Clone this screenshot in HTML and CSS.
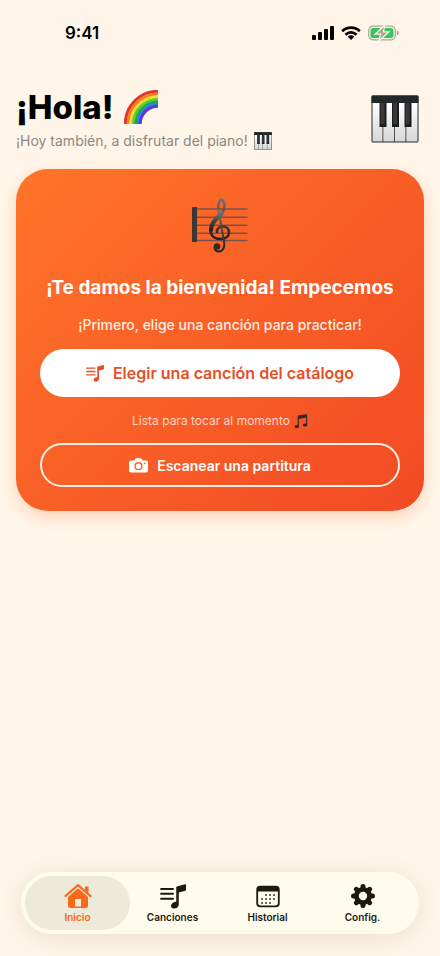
FILE: index.html
```
<!DOCTYPE html>
<html lang="es">
<head>
  <meta charset="UTF-8" />
  <meta name="viewport" content="width=device-width, initial-scale=1" />
  <title>Inicio</title>
  <link rel="stylesheet" href="styles.css">
</head>
<body>
  <svg class="defs" width="0" height="0" aria-hidden="true">
    <defs>
      <linearGradient id="keys" x1="0" y1="0" x2="0" y2="1">
        <stop offset="0" stop-color="#fff" />
        <stop offset="1" stop-color="#d6d6d6" />
      </linearGradient>
      <linearGradient id="clef-ink" x1="0" y1="0" x2="0" y2="1">
        <stop offset="0" stop-color="#77726e" />
        <stop offset="0.45" stop-color="#484442" />
        <stop offset="1" stop-color="#24211f" />
      </linearGradient>
      <symbol id="piano" viewBox="0 0 48 48">
        <rect x="0.5" y="0.5" width="47" height="47" rx="1.5" fill="#26292b" />
        <path d="M1.500 8h10v38.500h-10zM12.300 8h10.700v38.500h-10.700zM23.800 8h10.700v38.500h-10.700zM35.300 8h11.200v38.500h-11.200z" fill="url(#keys)" />
        <path d="M8.500 6h7v26h-7zM21 6h7v26h-7zM33.500 6h7v26h-7z" fill="#1b1c1d" />
        <path d="M9.500 7h4v22h-4zM22 7h4v22h-4zM34.500 7h4v22h-4z" fill="#36383a" />
        <rect x="0.500" y="0.500" width="47" height="7.500" rx="1" fill="#23282a" />
      </symbol>
      <symbol id="playlist" viewBox="0 0 24 24">
        <path d="M1 5.500h11M1 10h11M1 14.500h11" fill="none" stroke="currentColor" stroke-width="1.800" stroke-linecap="round" />
        <path d="M15.600 3.200 L23 1.200 Q24 1 24 2 V6.200 Q24 7 23.200 7.200 L17.300 8.700 V19.500 C17.300 22 15.500 23.500 13 23.500 C11 23.500 10 22.300 10.200 20.700 C10.500 18.500 13 17.500 15 17.300 V4 Q15 3.400 15.600 3.200Z" fill="currentColor" />
      </symbol>
    </defs>
  </svg>

  <div class="status-bar">
    <span class="time">9:41</span>
    <div class="status-icons">
      <svg width="22" height="14" viewBox="0 0 22 14" aria-hidden="true">
        <rect x="0" y="9" width="4" height="5" rx="1" />
        <rect x="6" y="6" width="4" height="8" rx="1" />
        <rect x="12" y="3" width="4" height="11" rx="1" />
        <rect x="18" y="0" width="4" height="14" rx="1" />
      </svg>
      <svg width="20" height="14" viewBox="0 0 20 14" aria-hidden="true">
        <path d="M1.200 5.200a12.500 12.500 0 0 1 17.600 0M4.500 8.700a7.800 7.800 0 0 1 11 0" fill="none" stroke="#000" stroke-width="2.700" />
        <path d="M10 14l-3.300-3.300a4.700 4.700 0 0 1 6.600 0z" />
      </svg>
      <svg width="31" height="16" viewBox="0 0 31 16" aria-hidden="true">
        <rect x="0.700" y="1.200" width="26.600" height="13.600" rx="4.500" fill="none" stroke="#aaa49b" stroke-width="1.200" />
        <rect x="2.500" y="3" width="23" height="10" rx="2.800" fill="#34c759" />
        <path d="M28.800 5.500c1.500.5 1.900 1.300 1.900 2.500s-.4 2-1.900 2.500z" fill="#aaa49b" />
        <path d="M17 0L7 9.200h5.600L10.800 16L21 6.800h-5.600z" fill="#aaa49b" stroke="#fff6e9" stroke-width="1.200" />
      </svg>
    </div>
  </div>

  <main>
    <header class="greeting">
      <div>
        <h1>¡Hola!
          <svg class="rainbow" viewBox="0 0 34 34" role="img" aria-label="arcoíris">
            <g fill="none" stroke-width="3">
              <path d="M1.300 34A32.700 32.700 0 0 1 34 1.300" stroke="#e3322b" />
              <path d="M4 34A30 30 0 0 1 34 4" stroke="#f57c20" />
              <path d="M6.700 34A27.300 27.300 0 0 1 34 6.700" stroke="#fdd92f" />
              <path d="M9.400 34A24.600 24.600 0 0 1 34 9.400" stroke="#57cf35" />
              <path d="M12 34A22 22 0 0 1 34 12" stroke="#20a54b" />
              <path d="M14 34A20 20 0 0 1 34 14" stroke="#2787df" />
              <path d="M16.200 34A17.800 17.800 0 0 1 34 16.200" stroke="#6734d2" />
            </g>
          </svg>
        </h1>
        <p>¡Hoy también, a disfrutar del piano! <svg class="piano-small" role="img" aria-label="piano"><use href="#piano" /></svg></p>
      </div>
      <svg class="piano" role="img" aria-label="piano"><use href="#piano" /></svg>
    </header>

    <section class="card">
      <svg class="clef" viewBox="0 0 56 56" role="img" aria-label="partitura">
        <path d="M4 11h51.500M4 19.300h51.500M4 27.300h51.500M4 35.300h51.500M4 42.500h51.500" stroke="#765449" stroke-width="1.400" />
        <rect x="0" y="9" width="5" height="35" fill="#3c3735" />
        <g fill="none" stroke="url(#clef-ink)" stroke-linecap="round" stroke-linejoin="round">
          <path d="M26.500 12C25.500 6 27.500 2 29.500 1.500C33 3.500 33.500 10 30.500 14.500C27 19.500 18.500 24 18.500 32C18.500 38 23 41 28.500 41C34 41 37 38 37 34.500C37 31 34.500 28.500 31 28.500C27 28.500 24.500 31 25 34" stroke-width="2.600" />
          <path d="M30 15C26 19.500 18.800 24 19 32" stroke-width="4.200" />
          <path d="M26.500 12L32.200 44.500C33 51 29.500 54 26 53.500C23.500 53 22.500 51.500 22.500 49.500" stroke-width="1.900" />
        </g>
        <circle cx="25" cy="48.500" r="3.300" fill="#302b28" />
      </svg>
      <h2>¡Te damos la bienvenida! Empecemos</h2>
      <p class="lead">¡Primero, elige una canción para practicar!</p>
      <button class="btn btn-primary" type="button">
        <svg class="icon-list" aria-hidden="true"><use href="#playlist" /></svg>
        Elegir una canción del catálogo
      </button>
      <p class="hint">Lista para tocar al momento
        <svg class="notes" viewBox="0 0 14 16" role="img" aria-label="notas">
          <path d="M4 2.500L13 1v3.500L4 6z" fill="#3b2a25" />
          <path d="M4.300 3v10M12.600 2v9.500" stroke="#3b2a25" stroke-width="1.200" />
          <ellipse cx="2.800" cy="13.500" rx="2.200" ry="1.600" fill="#2c211e" />
          <ellipse cx="11" cy="12" rx="2.200" ry="1.600" fill="#2c211e" />
        </svg>
      </p>
      <button class="btn btn-outline" type="button">
        <svg class="icon-camera" viewBox="0 0 19 15" aria-hidden="true">
          <path d="M2 2.500h3.200l1-1.600Q6.600.2 7.400.2h4.200q.8 0 1.200.7l1 1.600H17q2 0 2 2V12.500q0 2-2 2H2q-2 0-2-2V4.500q0-2 2-2z" fill="#fff" />
          <circle cx="9.500" cy="8.200" r="3.400" fill="none" stroke="#fa5f27" stroke-width="1.400" />
          <circle cx="15.600" cy="5.300" r="0.900" fill="#fa5f27" />
        </svg>
        Escanear una partitura
      </button>
    </section>
  </main>

  <nav class="tab-bar">
    <a class="tab active" href="#inicio" aria-current="page">
      <svg viewBox="0 0 28 26" aria-hidden="true">
        <path d="M1.500 13L14 2.200L26.500 13" fill="none" stroke="currentColor" stroke-width="2.200" stroke-linecap="round" stroke-linejoin="round" />
        <path d="M21 3.500h3.500V10L21 7z" fill="currentColor" />
        <path d="M14 5.300L24 14V22.500Q24 25 21.500 25H6.500Q4 25 4 22.500V14zM11 16v7.500h6V16z" fill="currentColor" fill-rule="evenodd" />
      </svg>
      Inicio
    </a>
    <a class="tab" href="#canciones">
      <svg aria-hidden="true"><use href="#playlist" /></svg>
      Canciones
    </a>
    <a class="tab" href="#historial">
      <svg viewBox="0 0 28 26" aria-hidden="true">
        <rect x="3.200" y="3.700" width="21.600" height="19.600" rx="3" fill="none" stroke="currentColor" stroke-width="1.800" />
        <path d="M3 8.500V5.500q0-2 2-2h18q2 0 2 2v3z" fill="currentColor" />
        <path d="M11.200 12h11M7.200 16h15M7.200 20h9.700" stroke="currentColor" stroke-width="1.700" stroke-dasharray="1.700 2.300" />
      </svg>
      Historial
    </a>
    <a class="tab" href="#config">
      <svg viewBox="0 0 28 26" aria-hidden="true">
        <g stroke="currentColor" stroke-width="5" stroke-linecap="round">
          <path d="M14 3.500v19M4.500 13h19M7.300 6.300l13.400 13.400M20.700 6.300L7.300 19.700" />
        </g>
        <circle cx="14" cy="13" r="9" fill="currentColor" />
        <circle cx="14" cy="13" r="4.200" fill="#fffcee" />
      </svg>
      Config.
    </a>
  </nav>
</body>
</html>
```
FILE: styles.css
```
* {
  box-sizing: border-box;
}
body {
  margin: 0;
  min-height: 100vh;
  display: flex;
  flex-direction: column;
  background: #fff6e9;
  color: #000;
  font-family: Inter, "Liberation Sans", sans-serif;
}
svg {
  flex: none;
}
h1,
h2,
p {
  margin: 0;
}
.defs {
  position: absolute;
}
.status-bar {
  display: flex;
  justify-content: space-between;
  align-items: center;
  height: 66px;
  padding: 0 41px 0 65px;
}
.time {
  font-size: 17px;
  font-weight: 600;
}
.status-icons {
  display: flex;
  align-items: center;
  gap: 7px;
}
main {
  padding: 19px 16px;
}
.greeting {
  display: flex;
  justify-content: space-between;
  align-items: center;
  padding-right: 5px;
  margin-bottom: 16px;
}
h1 {
  display: flex;
  align-items: center;
  gap: 10px;
  font-size: 33px;
  line-height: 44px;
  font-weight: 800;
}
.rainbow {
  width: 34px;
  height: 34px;
}
.greeting p {
  display: flex;
  align-items: center;
  gap: 6px;
  font-size: 14px;
  line-height: 24px;
  color: #8c8780;
}
.piano-small {
  width: 18px;
  height: 18px;
}
.piano {
  width: 48px;
  height: 48px;
}
.card {
  display: flex;
  flex-direction: column;
  align-items: center;
  padding: 28px 24px 24px;
  border-radius: 32px;
  background: linear-gradient(135deg, #ff7429, #f24a24);
  box-shadow: 0 6px 16px rgba(255, 107, 38, 0.25);
  color: #fff;
  text-align: center;
}
.clef {
  width: 56px;
  height: 58px;
}
h2 {
  margin-top: 20px;
  font-size: 19px;
  line-height: 26px;
  font-weight: 700;
}
.lead {
  margin: 14px 0;
  font-size: 14px;
  line-height: 20px;
  font-weight: 500;
  color: #ffece4;
}
.btn {
  display: flex;
  justify-content: center;
  align-items: center;
  width: 100%;
  border: none;
  border-radius: 24px;
  font-family: inherit;
  font-weight: 600;
  cursor: pointer;
}
.btn-primary {
  gap: 9px;
  height: 48px;
  background: #fff;
  color: #ea4e24;
  font-size: 16px;
}
.btn-outline {
  gap: 9px;
  height: 44px;
  border: 2px solid #ffeee6;
  background: transparent;
  color: #fff;
  font-size: 14px;
}
.icon-list {
  width: 18px;
  height: 18px;
}
.icon-camera {
  width: 19px;
  height: 15px;
}
.hint {
  display: flex;
  align-items: center;
  gap: 4px;
  margin: 14px 0 12px;
  font-size: 12px;
  line-height: 20px;
  color: #ffd5c5;
}
.notes {
  width: 14px;
  height: 16px;
}
.tab-bar {
  display: flex;
  margin: auto 21px 22px;
  padding: 4px 9px;
  border-radius: 31px;
  background: #fffcee;
  box-shadow: 0 4px 24px rgba(90, 60, 30, 0.12);
}
.tab {
  flex: 1;
  display: flex;
  flex-direction: column;
  align-items: center;
  gap: 1px;
  padding: 7px 0 5px;
  color: #1c1a10;
  font-size: 10px;
  line-height: 15px;
  font-weight: 600;
  text-decoration: none;
}
.tab svg {
  width: 28px;
  height: 26px;
}
/* the pill is a bit wider than its column */
.tab.active {
  flex: none;
  width: calc(25% + 10px);
  margin: 0 -5px;
  border-radius: 27px;
  background: #edeada;
  color: #f9691a;
}
```
